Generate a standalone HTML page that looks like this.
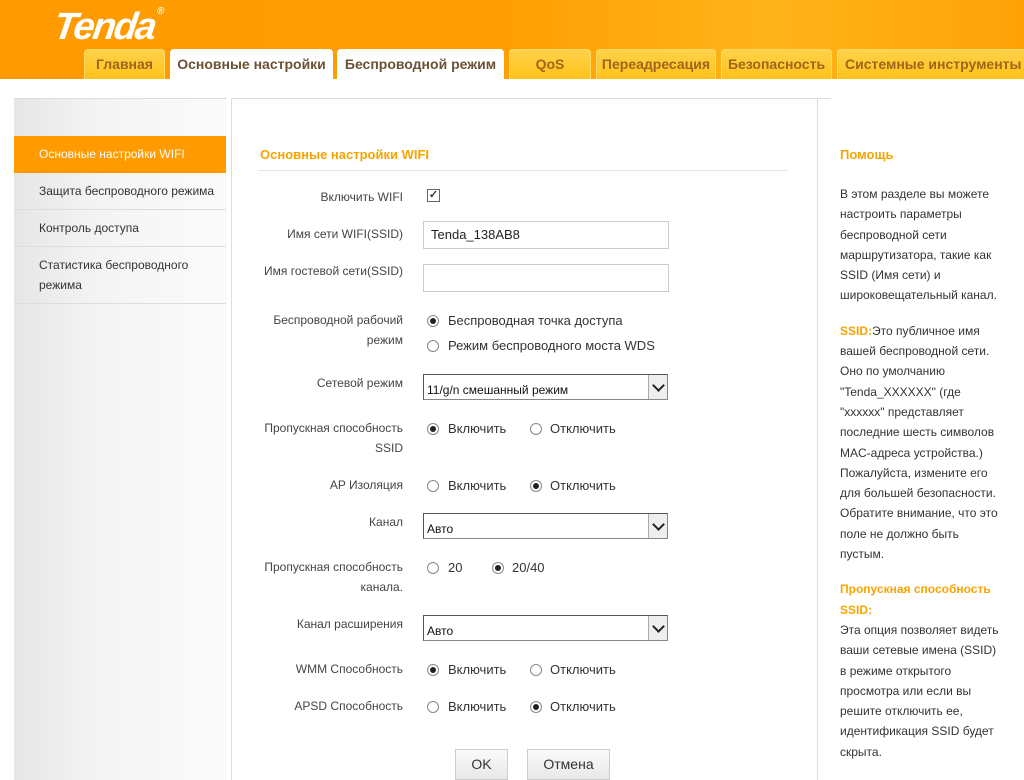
<!DOCTYPE html>
<html><head><meta charset="utf-8"><style>
*{margin:0;padding:0;box-sizing:border-box}
body{width:1024px;height:780px;overflow:hidden;background:#fff;font-family:"Liberation Sans",sans-serif;font-size:12px;color:#333;position:relative}
.a{position:absolute;white-space:nowrap}
#hdr{position:absolute;left:0;top:0;width:1024px;height:79px;background:linear-gradient(90deg,#ff9a00 0%,#ff9f05 50%,#ffb419 75%,#ffa208 100%)}
.logo{position:absolute;left:54px;top:6px;font:italic bold 38px "Liberation Sans",sans-serif;color:#fff;letter-spacing:-2px;transform:skewX(-8deg)}
.tab{position:absolute;top:49px;height:30px;border-radius:4px 4px 0 0;background:linear-gradient(#ffd24a,#ffc21a);border:1px solid #ffd866;border-bottom:none;font-weight:bold;font-size:14px;color:#a0651a;text-align:center;line-height:28px;white-space:nowrap;overflow:hidden}
.tab.w{background:#fff;color:#6b5235;border-color:#fff}
#side{position:absolute;left:14px;top:98px;width:213px;height:682px;background:linear-gradient(90deg,#e6e6e6,#f4f4f4 40%,#fbfbfb);border-top:1px solid #ddd}
.si{position:absolute;left:14px;width:212px;border-bottom:1px solid #ddd;padding-left:25px;font-size:12px;color:#333}
#main{position:absolute;left:231px;top:98px;width:600px;height:682px;border-left:1px solid #ddd;border-top:1px solid #ddd}
.lb{position:absolute;left:240px;width:163px;text-align:right;color:#444;line-height:20px}
.inp{position:absolute;left:423px;width:246px;height:28px;border:1px solid #ccc;padding-left:7px;line-height:26px;font-size:13px;color:#222}
.sel{position:absolute;left:423px;width:245px;height:26px;border:1px solid #888;border-top-color:#555;border-left-color:#555;font-size:12px;line-height:30px;padding-left:3px;color:#111}
.sel b{position:absolute;right:0;top:0;width:19px;height:24px;background:#eee;border-left:1px solid #aaa}
.sel b::after{content:"";position:absolute;left:5px;top:6px;width:7px;height:7px;border-right:2px solid #222;border-bottom:2px solid #222;transform:rotate(45deg)}
.r{position:absolute;width:12px;height:12px;border:1px solid #888;border-radius:50%;background:#fff}
.r.on::after{content:"";position:absolute;left:2px;top:2px;width:6px;height:6px;border-radius:50%;background:#222}
.rt{position:absolute;color:#333;font-size:13px;white-space:nowrap}
.btn{position:absolute;top:749px;height:31px;border:1px solid #ccc;background:linear-gradient(#fafafa,#e8e8e8);font-size:14px;text-align:center;line-height:29px;color:#333}
.help{position:absolute;left:840px;top:184px;width:164px;line-height:20.3px;font-size:12px;color:#333}
.o{color:#f7a400;font-weight:bold}
</style></head><body>
<div id="hdr">
<div class="logo">Tenda<span style="font-size:10px;vertical-align:top">®</span></div>
<div class="tab" style="left:84px;width:81px">Главная</div>
<div class="tab w" style="left:170px;width:163px">Основные настройки</div>
<div class="tab w" style="left:337px;width:167px">Беспроводной режим</div>
<div class="tab" style="left:509px;width:82px">QoS</div>
<div class="tab" style="left:596px;width:120px">Переадресация</div>
<div class="tab" style="left:721px;width:111px">Безопасность</div>
<div class="tab" style="left:837px;width:200px;text-align:left;padding-left:7px">Системные инструменты</div>
</div>
<div id="side"></div>
<div class="si" style="top:136px;height:37px;line-height:37px;background:#ff9a00;color:#fff;border:none">Основные настройки WIFI</div>
<div class="si" style="top:173px;height:37px;line-height:37px">Защита беспроводного режима</div>
<div class="si" style="top:210px;height:37px;line-height:37px">Контроль доступа</div>
<div class="si" style="top:247px;height:57px;line-height:20px;padding-top:8px">Статистика беспроводного<br>режима</div>
<div id="main"></div>
<div style="position:absolute;left:817px;top:98px;width:1px;height:682px;background:#ddd"></div>
<div class="a o" style="left:260px;top:147px;font-size:13px">Основные настройки WIFI</div>
<div style="position:absolute;left:258px;top:170px;width:530px;height:1px;background:#e6e6e6"></div>

<div class="lb" style="top:187px">Включить WIFI</div>
<div class="a" style="left:427px;top:189px;width:13px;height:13px;border:1px solid #666;background:#fff;font-size:11px;line-height:11px;text-align:center;font-weight:bold">✓</div>
<div class="lb" style="top:224px">Имя сети WIFI(SSID)</div>
<div class="inp" style="top:221px">Tenda_138AB8</div>
<div class="lb" style="top:261px">Имя гостевой сети(SSID)</div>
<div class="inp" style="top:264px"></div>
<div class="lb" style="top:310px">Беспроводной рабочий<br>режим</div>
<div class="r on" style="left:427px;top:315px"></div><div class="rt" style="left:448px;top:313px">Беспроводная точка доступа</div>
<div class="r" style="left:427px;top:340px"></div><div class="rt" style="left:448px;top:338px">Режим беспроводного моста WDS</div>
<div class="lb" style="top:373px">Сетевой режим</div>
<div class="sel" style="top:374px">11/g/n смешанный режим<b></b></div>
<div class="lb" style="top:418px">Пропускная способность<br>SSID</div>
<div class="r on" style="left:427px;top:423px"></div><div class="rt" style="left:448px;top:421px">Включить</div>
<div class="r" style="left:530px;top:423px"></div><div class="rt" style="left:550px;top:421px">Отключить</div>
<div class="lb" style="top:475px">AP Изоляция</div>
<div class="r" style="left:427px;top:480px"></div><div class="rt" style="left:448px;top:478px">Включить</div>
<div class="r on" style="left:530px;top:480px"></div><div class="rt" style="left:550px;top:478px">Отключить</div>
<div class="lb" style="top:512px">Канал</div>
<div class="sel" style="top:513px">Авто<b></b></div>
<div class="lb" style="top:557px">Пропускная способность<br>канала.</div>
<div class="r" style="left:427px;top:562px"></div><div class="rt" style="left:448px;top:560px">20</div>
<div class="r on" style="left:492px;top:562px"></div><div class="rt" style="left:512px;top:560px">20/40</div>
<div class="lb" style="top:614px">Канал расширения</div>
<div class="sel" style="top:615px">Авто<b></b></div>
<div class="lb" style="top:659px">WMM Способность</div>
<div class="r on" style="left:427px;top:664px"></div><div class="rt" style="left:448px;top:662px">Включить</div>
<div class="r" style="left:530px;top:664px"></div><div class="rt" style="left:550px;top:662px">Отключить</div>
<div class="lb" style="top:696px">APSD Способность</div>
<div class="r" style="left:427px;top:701px"></div><div class="rt" style="left:448px;top:699px">Включить</div>
<div class="r on" style="left:530px;top:701px"></div><div class="rt" style="left:550px;top:699px">Отключить</div>
<div class="btn" style="left:455px;width:53px">OK</div>
<div class="btn" style="left:527px;width:83px">Отмена</div>

<div class="a o" style="left:840px;top:147px;font-size:13px">Помощь</div>
<div class="help">В этом разделе вы можете настроить параметры беспроводной сети маршрутизатора, такие как SSID (Имя сети) и широковещательный канал.<br><div style="height:15px"></div><span class="o">SSID:</span>Это публичное имя вашей беспроводной сети. Оно по умолчанию "Tenda_XXXXXX" (где "xxxxxx" представляет последние шесть символов MAC-адреса устройства.) Пожалуйста, измените его для большей безопасности. Обратите внимание, что это поле не должно быть пустым.<br><div style="height:15px"></div><span class="o">Пропускная способность SSID:</span><br>Эта опция позволяет видеть ваши сетевые имена (SSID) в режиме открытого просмотра или если вы решите отключить ее, идентификация SSID будет скрыта.</div>
</body></html>
